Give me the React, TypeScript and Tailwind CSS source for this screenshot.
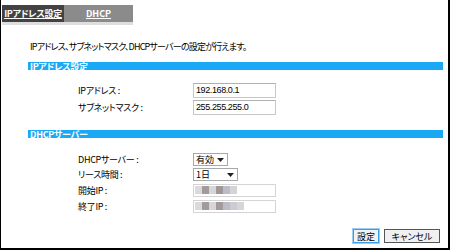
import React from "react";

const font = "[font-family:'Noto_Sans_CJK_JP','Liberation_Sans',sans-serif] [font-feature-settings:'palt']";

function SectionBar({ title }: { title: string }) {
  return (
    <div className="ml-[27px] mr-[5px] h-[8px] bg-[#1aa9f4] flex items-center">
      <span className="text-white text-[9px] font-bold leading-[9px] pl-[2px] tracking-[-0.3px]">{title}</span>
    </div>
  );
}

function TextBox({ value }: { value: string }) {
  return (
    <div className="w-[83px] h-[15px] border border-[#c8c8c8] border-t-[#b0b0b0] bg-white flex items-center pl-[2px] text-[9px] tracking-[-0.4px] leading-none [font-family:'Liberation_Sans',sans-serif]">
      {value}
    </div>
  );
}

function Blurred({ blocks }: { blocks: string[] }) {
  return (
    <div className="w-[83px] h-[13px] border border-[#d4d4d4] bg-white flex items-center pl-[1px]">
      {blocks.map((c, i) => (
        <div key={i} className="w-[7px] h-[8px]" style={{ backgroundColor: c }} />
      ))}
    </div>
  );
}

function Select({ value, width }: { value: string; width: string }) {
  return (
    <div className={`${width} h-[13px] border border-[#a8a8a8] bg-white flex items-center justify-between pl-[2px] pr-[3px] text-[9px] leading-none`}>
      <span>{value}</span>
      <svg width="7" height="4" viewBox="0 0 7 4">
        <path d="M0 0h7L3.5 4z" fill="#222" />
      </svg>
    </div>
  );
}

function Row({ label, children, h }: { label: string; children: React.ReactNode; h: string }) {
  return (
    <div className={`flex items-center ${h}`}>
      <div className="w-[192px] shrink-0 pl-[77px] text-[9px] leading-none whitespace-nowrap tracking-[-0.3px]">{label}</div>
      {children}
    </div>
  );
}

export default function App() {
  return (
    <div className={`w-[450px] h-[250px] bg-white border-l border-r-2 border-b-2 border-black flex flex-col text-black ${font}`}>
      <div className="flex ml-px mt-[5px]">
        <div className="w-[62px] h-[17px] bg-[#424242] flex items-center justify-center text-white text-[9px] font-bold underline tracking-[-0.3px]">
          IPアドレス設定
        </div>
        <div className="w-[69px] h-[17px] bg-[#8b8b8b] flex items-center justify-center text-white text-[9px] font-bold underline">
          DHCP
        </div>
      </div>
      <div className="ml-px w-[131px] h-[3px] bg-[#dedede]" />

      <p className="ml-[29px] mt-[17px] text-[9px] leading-[10px] tracking-[-0.8px]">
        IPアドレス、サブネットマスク、DHCPサーバーの設定が行えます。
      </p>

      <div className="mt-[10px]">
        <SectionBar title="IPアドレス設定" />
      </div>

      <div className="mt-[13px] flex flex-col gap-[2px]">
        <Row label="IPアドレス :" h="h-[15px]">
          <TextBox value="192.168.0.1" />
        </Row>
        <Row label="サブネットマスク :" h="h-[15px]">
          <TextBox value="255.255.255.0" />
        </Row>
      </div>

      <div className="mt-[15px]">
        <SectionBar title="DHCPサーバー" />
      </div>

      <div className="mt-[15px] flex flex-col gap-[2px]">
        <Row label="DHCPサーバー :" h="h-[13px]">
          <Select value="有効" width="w-[35px]" />
        </Row>
        <Row label="リース時間 :" h="h-[13px]">
          <Select value="1日" width="w-[45px]" />
        </Row>
        <Row label="開始IP :" h="h-[14px]">
          <Blurred blocks={["#dadada", "#a39b9b", "#d6d6d6", "#a09898", "#bdbdc5", "#d4d4d4"]} />
        </Row>
        <Row label="終了IP :" h="h-[14px]">
          <Blurred blocks={["#dadada", "#a39b9b", "#d6d6d6", "#a39b9b", "#bdbdc5", "#cbcbd3", "#d6d6d6"]} />
        </Row>
      </div>

      <div className="mt-auto mb-[5px] mr-[8px] flex justify-end gap-[5px]">
        <button className="h-[14px] px-[3px] border border-[#3a9ee8] bg-[#f2f2f2] text-[9px] leading-none outline outline-1 outline-[#9ccdf3]">
          設定
        </button>
        <button className="w-[56px] h-[14px] border border-[#555] bg-[#f0f0f0] text-[9px] leading-none">
          キャンセル
        </button>
      </div>
    </div>
  );
}
